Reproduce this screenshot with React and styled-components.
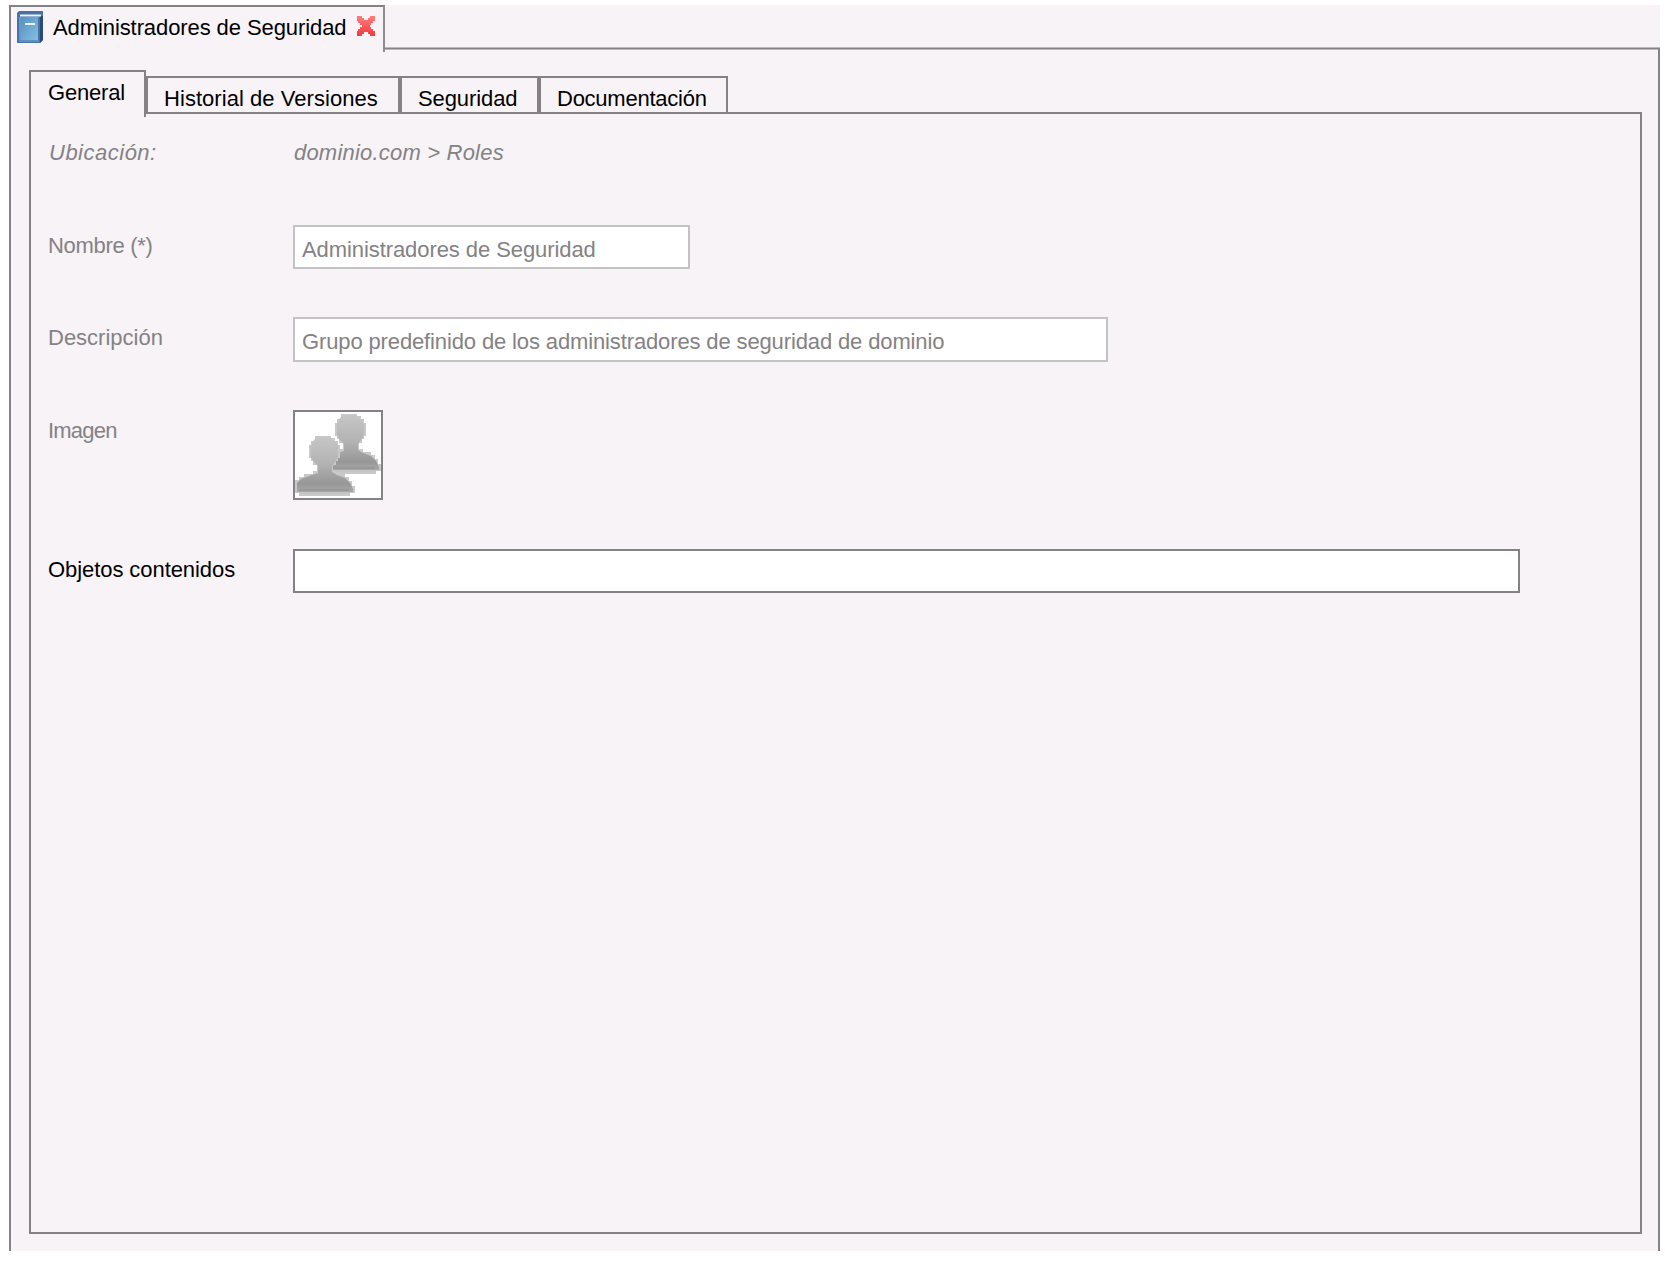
import React from "react";
import styled, { createGlobalStyle } from "styled-components";

const line = "#848284";
const surface = "#f7f3f7";

const GlobalStyle = createGlobalStyle`
  * { box-sizing: border-box; }
  body {
    margin: 0;
    background: #fff;
    font-family: "Liberation Sans", Arial, sans-serif;
    font-size: 22px;
    line-height: 26px;
    color: #000;
  }
`;

const Page = styled.main`
  width: 1665px;
  height: 1261px;
  padding: 5px 5px 10px 9px;
`;

const Window = styled.section`
  display: flex;
  flex-direction: column;
  height: 1246px;
  background: ${surface};
`;

const WindowTabs = styled.header`
  display: flex;
  height: 44px;
  flex: none;
`;

const WindowTab = styled.div`
  display: flex;
  align-items: flex-start;
  width: 376px;
  height: 47px;
  padding-left: 6px;
  border: 2px solid ${line};
  border-bottom: 0;
  border-right-color: #8e8c8e;
  background: ${surface};
  z-index: 1;
`;

const WindowTitle = styled.h1`
  width: 303px;
  flex: none;
  margin: 8px 0 0 10px;
  font-size: 22px;
  font-weight: 400;
  letter-spacing: -0.09px;
  white-space: nowrap;
`;

const TabsRest = styled.div`
  flex: 1;
  border-bottom: 1px solid ${line};
  box-shadow: 0 1px 0 #bdbabd, inset 0 -1px 0 #bdbabd;
`;

const WindowBody = styled.div`
  flex: 1;
  padding: 21px 16px 17px 18px;
  border: 2px solid ${line};
  border-top: 0;
  border-bottom: 0;
`;

const TabList = styled.nav`
  display: flex;
  height: 42px;
  align-items: flex-end;
`;

const Tab = styled.div`
  display: flex;
  align-items: flex-start;
  width: ${(p) => p.$width}px;
  height: ${(p) => (p.$active ? 47 : 36)}px;
  margin-bottom: ${(p) => (p.$active ? -5 : 0)}px;
  padding: ${(p) => (p.$active ? "8px 0 0 17px" : "8px 0 0 16px")};
  border: 2px solid ${line};
  border-bottom: 0;
  background: ${surface};
  letter-spacing: ${(p) => p.$tracking || 0}px;
  white-space: nowrap;
  z-index: ${(p) => (p.$active ? 1 : 0)};
`;

const Panel = styled.div`
  height: 1122px;
  padding: 26px 17px 0;
  border: 2px solid ${line};
`;

const Row = styled.div`
  display: flex;
  align-items: flex-start;
  height: ${(p) => p.$height}px;
`;

const Label = styled.div`
  width: 245px;
  flex: none;
  padding-top: ${(p) => p.$top ?? 8}px;
  padding-left: ${(p) => (p.$italic ? 1 : 0)}px;
  color: ${(p) => (p.$dark ? "#000" : line)};
  font-style: ${(p) => (p.$italic ? "italic" : "normal")};
  letter-spacing: ${(p) => p.$tracking || 0}px;
  white-space: nowrap;
`;

const Location = styled.div`
  padding-left: 1px;
  color: ${line};
  font-style: italic;
  letter-spacing: 0.2px;
`;

const Field = styled.div`
  width: ${(p) => p.$width}px;
  height: ${(p) => p.$height || 44}px;
  padding: 10px 0 0 7px;
  border: 2px solid ${(p) => (p.$dark ? line : "#c4c3c4")};
  background: #fff;
  color: ${line};
  letter-spacing: ${(p) => p.$tracking || 0}px;
  white-space: nowrap;
`;

const Picture = styled.div`
  width: 90px;
  height: 90px;
  border: 2px solid ${line};
  background: #fff;
`;

const BookSvg = styled.svg`
  flex: none;
  width: 26px;
  height: 33px;
  margin-top: 4px;
`;

const CloseSvg = styled.svg`
  flex: none;
  width: 20px;
  height: 20px;
  margin-top: 9px;
`;

const PeopleSvg = styled.svg`
  display: block;
  width: 86px;
  height: 86px;
`;

function BookIcon() {
  return (
    <BookSvg viewBox="0 0 26 33">
      <defs>
        <linearGradient id="cover" x1="0" y1="0" x2="1" y2="1">
          <stop offset="0" stopColor="#5591c2" />
          <stop offset="1" stopColor="#86bfe0" />
        </linearGradient>
      </defs>
      <path d="M2 0H26V29L23 32H0V2Z" fill="#4672a8" />
      <path d="M23 5H26V29L23 32Z" fill="#2a4a78" />
      <rect x="4" y="6" width="17" height="23" fill="url(#cover)" />
      <rect x="2" y="6" width="2" height="23" fill="#6a98c6" />
      <rect x="2" y="29" width="20" height="2" fill="#5d8fc0" />
      <path d="M3 4.5H24" stroke="#eef4f9" strokeWidth="2" />
      <rect x="8" y="12" width="10" height="2" fill="#e8f4fb" />
    </BookSvg>
  );
}

function CloseIcon() {
  return (
    <CloseSvg viewBox="0 0 20 20">
      <defs>
        <linearGradient id="cross" x1="0" y1="0" x2="0" y2="1">
          <stop offset="0" stopColor="#ff7d80" />
          <stop offset="1" stopColor="#f7393d" />
        </linearGradient>
      </defs>
      <path
        d="M1 0H6V2H8V4H12V2H14V0H19V5H17V7H15V9H14V11H15V13H17V15H19V20H14V18H12V16H8V18H6V20H1V15H2V13H4V11H6V9H4V7H2V5H1Z"
        fill="url(#cross)"
      />
    </CloseSvg>
  );
}

function Person({ x, y }) {
  return (
    <g transform={`translate(${x} ${y})`}>
      <path
        d="M20 0H36V2H40V5H43V9H45V22H43V25H41V29H38V35H42V38H50V41H54V45H57V50H60V57H55V60H4V57H0V44H4V41H9V38H18V35H22V29H18V25H16V22H14V9H16V5H20Z"
        fill="#c9c9c9"
      />
      <path
        d="M23 1H35L40 5L43 10V21L40 26L37 30V36L42 39L50 42L55 47L58 53V56H2V47L6 43L14 40L23 37V30L19 26L16 21V10L19 4Z"
        fill="url(#person)"
      />
      <path d="M4 54H54" stroke="#989898" strokeWidth="2" />
      <path d="M4 57H55" stroke="#c4c4c4" strokeWidth="2" />
    </g>
  );
}

function PeopleIcon() {
  return (
    <PeopleSvg viewBox="0 0 86 86">
      <defs>
        <linearGradient id="person" x1="0" y1="0" x2="0" y2="1">
          <stop offset="0" stopColor="#c6c6c6" />
          <stop offset=".5" stopColor="#b2b2b2" />
          <stop offset=".85" stopColor="#979797" />
          <stop offset="1" stopColor="#a8a8a8" />
        </linearGradient>
      </defs>
      <Person x={26} y={2} />
      <Person x={0} y={24} />
    </PeopleSvg>
  );
}

export default function App() {
  return (
    <Page>
      <GlobalStyle />
      <Window>
        <WindowTabs>
          <WindowTab>
            <BookIcon />
            <WindowTitle>Administradores de Seguridad</WindowTitle>
            <CloseIcon />
          </WindowTab>
          <TabsRest />
        </WindowTabs>
        <WindowBody>
          <TabList>
            <Tab $active $width={117} $tracking={-0.2}>General</Tab>
            <Tab $width={254} $tracking={0.05}>Historial de Versiones</Tab>
            <Tab $width={139} $tracking={-0.1}>Seguridad</Tab>
            <Tab $width={189} $tracking={-0.25}>Documentación</Tab>
          </TabList>
          <Panel>
            <Row $height={85}>
              <Label $top={0} $italic $tracking={0.5}>Ubicación:</Label>
              <Location>dominio.com &gt; Roles</Location>
            </Row>
            <Row $height={92}>
              <Label $tracking={-0.3}>Nombre (*)</Label>
              <Field $width={397} $tracking={-0.08}>Administradores de Seguridad</Field>
            </Row>
            <Row $height={93}>
              <Label>Descripción</Label>
              <Field $width={815} $height={45} $tracking={-0.13}>
                Grupo predefinido de los administradores de seguridad de dominio
              </Field>
            </Row>
            <Row $height={139}>
              <Label $tracking={-0.8}>Imagen</Label>
              <Picture>
                <PeopleIcon />
              </Picture>
            </Row>
            <Row $height={44}>
              <Label $dark $tracking={-0.07}>Objetos contenidos</Label>
              <Field $dark $width={1227} />
            </Row>
          </Panel>
        </WindowBody>
      </Window>
    </Page>
  );
}
